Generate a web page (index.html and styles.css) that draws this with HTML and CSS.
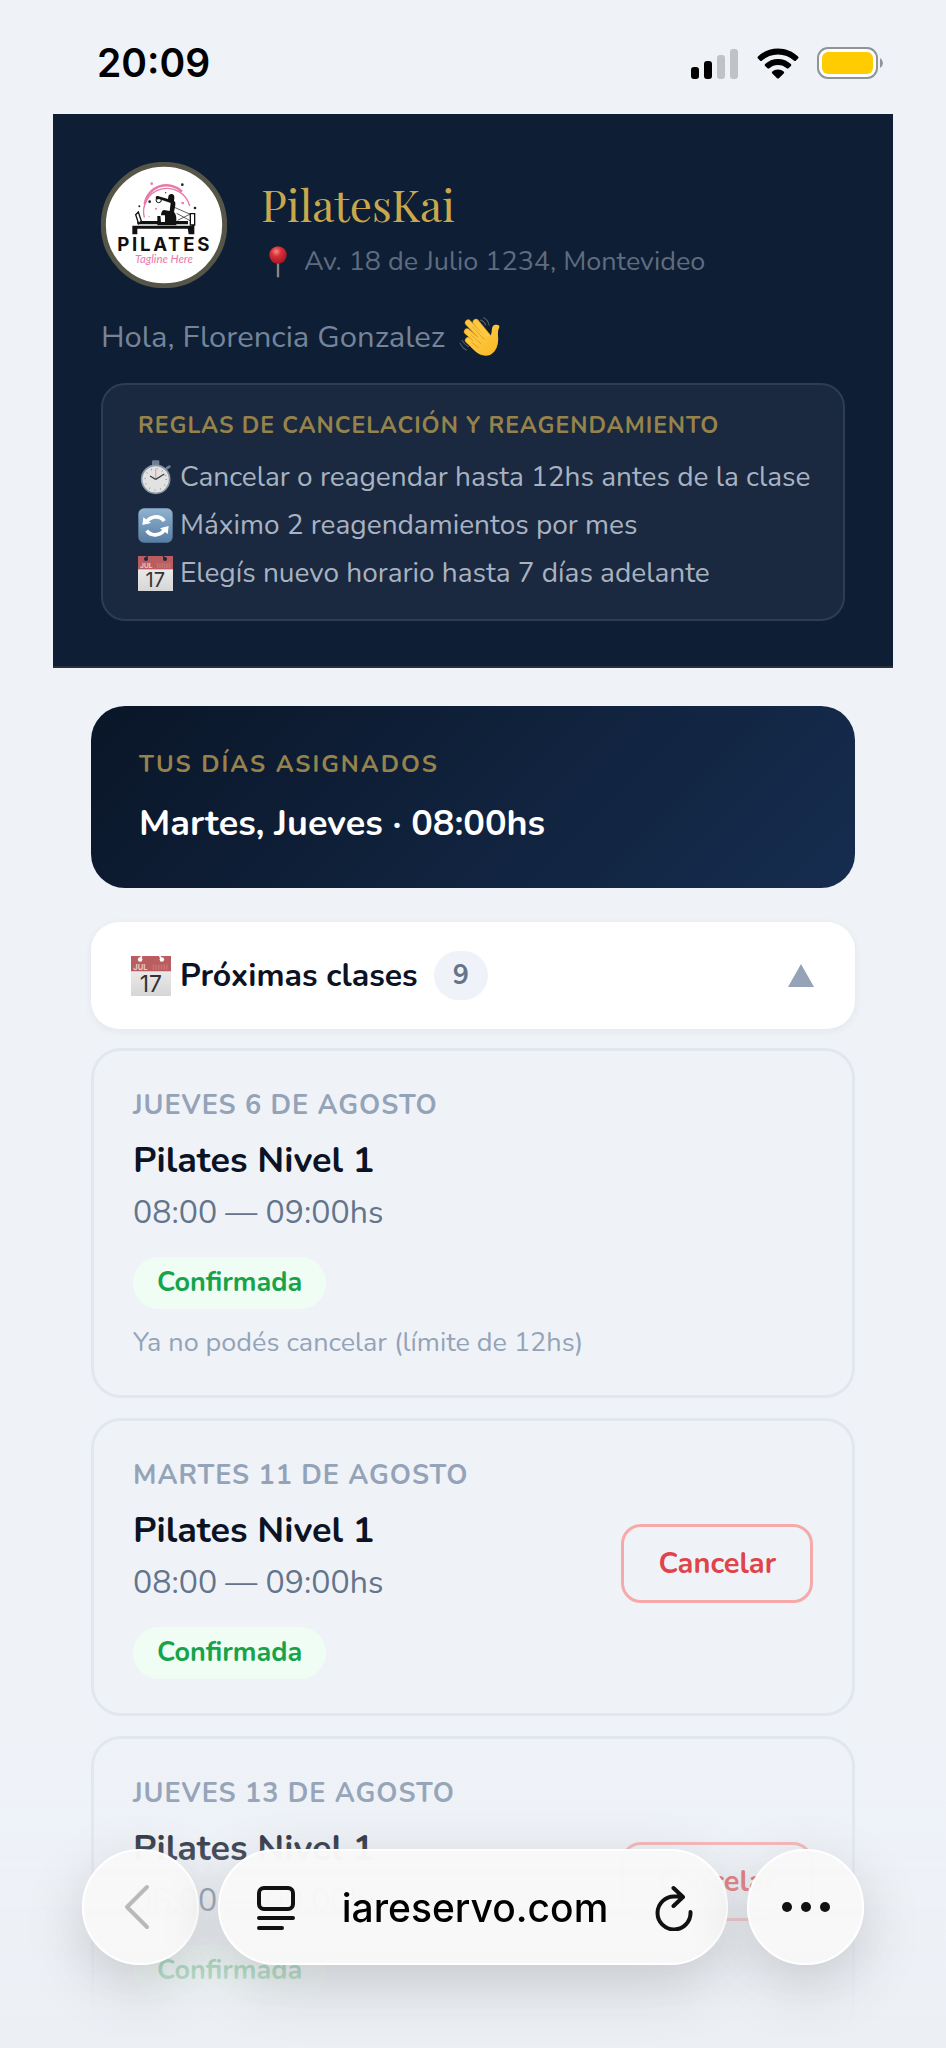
FILE: index.html
```html
<!DOCTYPE html>
<html lang="es">
<head>
<meta charset="utf-8">
<meta name="viewport" content="width=device-width, initial-scale=1">
<title>PilatesKai</title>
<link rel="stylesheet" href="styles.css">
</head>
<body>
<svg class="defs" aria-hidden="true">
  <defs>
    <linearGradient id="sync-bg" x1="0" y1="0" x2="0" y2="1">
      <stop offset="0" stop-color="#8fb3cf"/><stop offset="1" stop-color="#587da3"/>
    </linearGradient>
    <linearGradient id="hand-bg" x1="0" y1="0" x2="1" y2="1">
      <stop offset="0" stop-color="#ffd34f"/><stop offset="1" stop-color="#fbb423"/>
    </linearGradient>
    <radialGradient id="pin-bg" cx=".4" cy=".3" r=".7">
      <stop offset="0" stop-color="#f28a80"/><stop offset=".4" stop-color="#d8303a"/><stop offset="1" stop-color="#a81624"/>
    </radialGradient>
    <linearGradient id="page-bg" x1="0" y1="0" x2="0" y2="1">
      <stop offset="0" stop-color="#d8d8d8"/><stop offset=".4" stop-color="#e8e8e8"/><stop offset="1" stop-color="#d6d6d6"/>
    </linearGradient>
    <symbol id="calendar" viewBox="0 0 105 105">
      <rect y="3" width="105" height="102" fill="url(#page-bg)"/>
      <rect width="105" height="40" fill="#b95d60"/>
      <circle class="hole" cx="24" cy="9" r="6"/><circle class="hole" cx="81" cy="9" r="6"/>
      <path class="hole-line" d="M24 9l4-9M81 9l-6-9"/>
      <text x="6" y="36" class="cal-month">JUL</text>
      <path d="M59 22v14M66 22v14M73 22v14M80 22v14M87 22v14M94 22v14" stroke="#c97375" stroke-width="4"/>
      <text x="52" y="94" text-anchor="middle" class="cal-day">17</text>
    </symbol>
  </defs>
</svg>

<div class="statusbar">
  <time class="clock">20:09</time>
  <div class="status-icons">
    <svg class="signal" viewBox="0 0 48 31" role="img" aria-label="Señal">
      <rect x="0" y="19" width="8" height="12" rx="3"/><rect x="13" y="13" width="8" height="18" rx="3"/>
      <rect x="26" y="7" width="8" height="24" rx="3" fill="#bfc3c8"/><rect x="39" y="1" width="8" height="30" rx="3" fill="#bfc3c8"/>
    </svg>
    <svg class="wifi" viewBox="0 0 42 31" role="img" aria-label="Wi-Fi">
      <path d="M21 0.500C29 .5 36 3.600 41 8.500q1 1 0 2l-2.200 2.200q-.8.700-1.700 0C32.500 8.600 27 6.500 21 6.500S9.500 8.600 4.900 12.700q-.9.700-1.700 0L1 10.500q-1-1 0-2C6 3.600 13 .5 21 .5z"/>
      <path d="M21 11c5 0 9.500 1.900 12.900 5q1 1 0 2l-2.400 2.300q-.8.700-1.700 0C27.300 18.200 24.400 17 21 17s-6.300 1.200-8.800 3.300q-.9.700-1.700 0L8.100 18q-1-1 0-2C11.500 12.900 16 11 21 11z"/>
      <path d="M21 21.500c2.200 0 4.200.8 5.700 2.100q1 .9 0 1.900l-4.800 4.700q-.9.800-1.800 0l-4.800-4.700q-1-1 0-1.900c1.500-1.300 3.500-2.100 5.700-2.100z"/>
    </svg>
    <svg class="battery" viewBox="0 0 67 32" role="img" aria-label="Batería">
      <rect x="1" y="1" width="59" height="30" rx="10" fill="#fff" stroke="#8f949b" stroke-width="2"/>
      <rect x="5" y="5" width="51" height="22" rx="6" fill="#ffcc02"/>
      <path d="M63 11q3 2 3 5t-3 5z" fill="#8f949b"/>
    </svg>
  </div>
</div>

<header class="header">
  <div class="brand">
    <svg class="logo" viewBox="153 158 378 378" role="img" aria-label="Logo Pilates">
      <circle cx="342" cy="347" r="182" fill="#fff" stroke="#565648" stroke-width="15"/>
      <path d="M283 325a70 70 0 1 1 136-35" fill="none" stroke="#e879a8" stroke-width="4"/>
      <path d="M284 285a66 66 0 0 1 112-38" fill="none" stroke="#e879a8" stroke-width="7"/>
      <g fill="#e879a8"><circle cx="305" cy="223" r="4"/><circle cx="398" cy="281" r="4"/><circle cx="318" cy="298" r="3"/><circle cx="297" cy="321" r="2"/></g>
      <g fill="#222"><circle cx="397" cy="226" r="4"/><circle cx="435" cy="296" r="4"/><circle cx="299" cy="277" r="4"/><circle cx="268" cy="291" r="3"/><circle cx="347" cy="250" r="2"/></g>
      <path d="M247 349h186v9H262v17h-15zM433 345v30h-17l-3-19zM262 335h152v10H262z" fill="#111"/>
      <path d="M257 316l8-8 9 27-8 8zM421 313h13v34h-13z" fill="#fff" stroke="#111" stroke-width="4"/>
      <path d="M371 293l50 22M383 333l40-20M380 312l40 22" stroke="#111" stroke-width="2"/>
      <path d="M355 262q1-8 9-8 10 0 9 12l-1 8q6 4 4 14l-4 20q8 8 7 28v12h-57v-28h11q0-17 9-18l17 3 3-24-35-12q-9 4-10-4-1-6 6-5l31 9z" fill="#111"/>
      <path d="M331 318h14v20h-12z" fill="#fff"/><circle cx="326" cy="272" r="8" fill="none" stroke="#111" stroke-width="3"/>
      <text x="344" y="425" text-anchor="middle" class="logo-name">PILATES</text>
      <text x="342" y="462" text-anchor="middle" class="logo-tag">Tagline Here</text>
    </svg>
    <div class="brand-text">
      <h1 class="brand-name">PilatesKai</h1>
      <p class="address">
        <svg class="pin" viewBox="0 0 54 96" aria-hidden="true"><path d="M27 48v43" stroke="#8d8486" stroke-width="7" stroke-linecap="round"/><circle cx="27" cy="27" r="26" fill="url(#pin-bg)"/></svg>
        Av. 18 de Julio 1234, Montevideo
      </p>
    </div>
  </div>
  <p class="greeting">Hola, Florencia Gonzalez
    <svg class="wave" viewBox="1229 617 124 124" role="img" aria-label="Saludo">
      <g fill="none" stroke="#e39a16" stroke-linecap="round" stroke-width="19"><path d="M1279 635l38 46M1256 637l48 50M1253 663l42 37M1256 689l32 27"/></g>
      <g fill="none" stroke="#ffca42" stroke-linecap="round" stroke-width="15"><path d="M1279 635l38 46M1256 637l48 50M1253 663l42 37M1256 689l32 27"/></g>
      <path d="M1323 675q3-10 3-19 2-14 13-13 13 1 8 10-3 4-3 18 4 33-10 50-17 20-43 10-15-7-34-31l30-22z" fill="url(#hand-bg)"/>
      <path d="M1268 648l36 39M1263 671l32 29M1266 694l21 17" fill="none" stroke="#d88f18" stroke-width="2"/>
      <path d="M1301 622q13 5 17 22M1292 629q12 4 16 15M1232 697q6 14 19 21M1238 689q6 12 19 18" fill="none" stroke="#56606a" stroke-width="3" stroke-linecap="round"/>
    </svg>
  </p>
  <section class="rules">
    <h2 class="rules-title">REGLAS DE CANCELACIÓN Y REAGENDAMIENTO</h2>
    <ul class="rules-list">
      <li>
        <svg class="emoji" viewBox="0 0 105 105" aria-hidden="true">
          <rect x="42" y="1" width="22" height="16" rx="4" fill="#6d7f91"/><path d="M86 25l8-5" stroke="#6d7f91" stroke-width="8" stroke-linecap="round"/>
          <circle cx="53" cy="58" r="42" fill="#e3e2e2" stroke="#8b97a4" stroke-width="5"/>
          <circle cx="53" cy="58" r="32" fill="none" stroke="#8b8b8b" stroke-width="5" stroke-dasharray="2 15"/>
          <path d="M53 58V26" stroke="#e9a3a3" stroke-width="4"/><path d="M53 58L36 48M53 58l26-16" stroke="#3e4347" stroke-width="4"/>
        </svg>Cancelar o reagendar hasta 12hs antes de la clase</li>
      <li>
        <svg class="emoji" viewBox="0 0 105 105" aria-hidden="true">
          <rect x="1" y="1" width="103" height="103" rx="17" fill="url(#sync-bg)"/>
          <path d="M24 47a31 29 0 0 1 55-8M81 60a31 29 0 0 1-55 8" fill="none" stroke="#fff" stroke-width="11"/>
          <path d="M13 51l3-23 23 17zM92 54l-3 24-23-17z" fill="#fff"/>
        </svg>Máximo 2 reagendamientos por mes</li>
      <li><svg class="emoji cal-dark" aria-hidden="true"><use href="#calendar"/></svg>Elegís nuevo horario hasta 7 días adelante</li>
    </ul>
  </section>
</header>

<main class="main">
  <section class="assigned">
    <h2 class="assigned-label">TUS DÍAS ASIGNADOS</h2>
    <p class="assigned-days">Martes, Jueves · 08:00hs</p>
  </section>

  <button class="accordion" type="button" aria-expanded="true">
    <svg class="accordion-icon cal-light" aria-hidden="true"><use href="#calendar"/></svg>
    <span class="accordion-title">Próximas clases</span>
    <span class="count">9</span>
    <svg class="triangle" viewBox="0 0 26 23" aria-hidden="true"><path d="M13 0l13 23H0z"/></svg>
  </button>

  <div class="cards">
    <article class="card">
      <div class="card-info">
        <p class="card-date">JUEVES 6 DE AGOSTO</p>
        <h3 class="card-title">Pilates Nivel 1</h3>
        <p class="card-time">08:00 — 09:00hs</p>
        <span class="badge">Confirmada</span>
        <p class="card-note">Ya no podés cancelar (límite de 12hs)</p>
      </div>
    </article>

    <article class="card">
      <div class="card-info">
        <p class="card-date">MARTES 11 DE AGOSTO</p>
        <h3 class="card-title">Pilates Nivel 1</h3>
        <p class="card-time">08:00 — 09:00hs</p>
        <span class="badge">Confirmada</span>
      </div>
      <button class="cancel" type="button">Cancelar</button>
    </article>

    <article class="card">
      <div class="card-info">
        <p class="card-date">JUEVES 13 DE AGOSTO</p>
        <h3 class="card-title">Pilates Nivel 1</h3>
        <p class="card-time">08:00 — 09:00hs</p>
        <span class="badge">Confirmada</span>
      </div>
      <button class="cancel" type="button">Cancelar</button>
    </article>
  </div>
</main>

<nav class="browser" aria-label="Navegador">
  <button class="round" type="button" aria-label="Atrás">
    <svg class="back-icon" viewBox="0 0 26 46" aria-hidden="true"><path d="M23 3L3 23l20 20"/></svg>
  </button>
  <div class="urlbar">
    <button class="tool" type="button" aria-label="Opciones de página">
      <svg class="page-icon" viewBox="0 0 38 46" aria-hidden="true"><rect x="2" y="3" width="34" height="21" rx="5"/><path d="M2 33h34M2 43h23"/></svg>
    </button>
    <button class="url" type="button">iareservo.com</button>
    <button class="tool" type="button" aria-label="Recargar">
      <svg class="reload-icon" viewBox="0 0 38 46" aria-hidden="true"><path d="M27 11.500H20A16.500 16.500 0 1 0 35.500 27M18.500 3L28 12l-9.500 9"/></svg>
    </button>
  </div>
  <button class="round" type="button" aria-label="Más">
    <svg class="more-icon" viewBox="0 0 48 10" aria-hidden="true"><circle cx="5" cy="5" r="5"/><circle cx="24" cy="5" r="5"/><circle cx="43" cy="5" r="5"/></svg>
  </button>
</nav>
</body>
</html>
```
FILE: styles.css
```css
* { box-sizing: border-box; }

body {
  margin: 0;
  background: #eff3f8;
  color: #0b1324;
  font-family: Nunito, Lato, "Noto Sans", sans-serif;
}

h1, h2, h3, p, ul { margin: 0; padding: 0; }
ul { list-style: none; }
button { font: inherit; border: 0; background: none; padding: 0; color: inherit; }
svg { flex: none; display: block; }
.defs { position: absolute; width: 0; height: 0; }

/* Status bar */
.statusbar {
  display: flex;
  align-items: center;
  justify-content: space-between;
  height: 114px;
  padding: 12px 62px 0 97px;
  color: #000;
}
.clock { font: 600 39px/50px Inter, sans-serif; }
.status-icons { display: flex; align-items: center; gap: 18px; }
.signal { width: 48px; height: 31px; }
.wifi { width: 42px; height: 31px; }
.battery { width: 67px; height: 32px; }

/* Header */
.header {
  margin: 0 53px;
  padding: 48px 48px 45px;
  background: #0e1e34;
  border-bottom: 2px solid #2a303a;
}
.brand { display: flex; align-items: center; gap: 34px; }
.logo { width: 126px; height: 126px; }
.logo-name { font: 700 56px Inter, sans-serif; letter-spacing: 8px; fill: #111; }
.logo-tag { font: italic 34px Lato, sans-serif; fill: #e879a8; }
.brand-text { padding-top: 8px; }
.brand-name {
  font: 400 44px/56px "Playfair Display", "Liberation Serif", serif;
  color: #c9a84c;
}
.address {
  display: flex;
  align-items: center;
  gap: 17px;
  margin-top: 10px;
  padding-left: 8px;
  font-size: 27px;
  line-height: 40px;
  color: #5f6c80;
}
.pin { width: 18px; height: 32px; }
.greeting {
  display: flex;
  align-items: center;
  gap: 14px;
  margin-top: 29px;
  font-size: 31px;
  line-height: 40px;
  color: #76849a;
}
.wave { width: 42px; height: 42px; margin: -1px 0; }
.rules {
  margin-top: 26px;
  padding: 24px 24px 22px 35px;
  border: 2px solid #2e3d53;
  border-radius: 24px;
  background: #1a293f;
}
.rules-title {
  margin-bottom: 10px;
  font-size: 23px;
  line-height: 34px;
  font-weight: 700;
  letter-spacing: 1px;
  color: #96834b;
}
.rules-list li {
  display: flex;
  align-items: center;
  gap: 7px;
  font-size: 28px;
  line-height: 48px;
  color: #a8b2c1;
}
.emoji { width: 35px; height: 35px; }
.cal-month { font: 700 20px Inter, sans-serif; fill: #e8c9c9; }
.cal-day { font: 400 60px Inter, sans-serif; fill: #333; }
.cal-dark { --hole: #1a293f; }
.cal-light { --hole: #fff; }
.hole { fill: var(--hole); }
.hole-line { stroke: var(--hole); stroke-width: 4px; }

/* Content */
.main { padding: 38px 91px 0; }
.assigned {
  padding: 41px 48px 38px;
  border-radius: 34px;
  background: linear-gradient(135deg, #0a1628, #162d50);
}
.assigned-label {
  font-size: 24px;
  line-height: 34px;
  font-weight: 700;
  letter-spacing: 2px;
  color: #96834b;
}
.assigned-days {
  margin-top: 16px;
  font-size: 36px;
  line-height: 53px;
  font-weight: 700;
  color: #fff;
}
.accordion {
  display: flex;
  align-items: center;
  width: 100%;
  height: 107px;
  margin-top: 34px;
  padding: 0 41px 0 40px;
  border-radius: 28px;
  background: #fff;
  box-shadow: 0 2px 8px rgb(15 30 52 / 6%);
}
.accordion-icon { width: 40px; height: 40px; margin-right: 9px; }
.accordion-title { font-size: 32px; line-height: 44px; font-weight: 700; }
.count {
  margin-left: 16px;
  padding: 0 19px;
  border-radius: 25px;
  background: #eff3f9;
  font-size: 27px;
  line-height: 49px;
  font-weight: 700;
  color: #64748b;
}
.triangle { width: 26px; height: 23px; margin-left: auto; fill: #94a3b8; }

.cards { display: grid; gap: 20px; margin-top: 19px; }
.card {
  display: flex;
  align-items: center;
  justify-content: space-between;
  padding: 38px 39px 34px;
  border: 3px solid #e2e7ef;
  border-radius: 30px;
}
.card-date {
  font-size: 27px;
  line-height: 34px;
  font-weight: 700;
  letter-spacing: 1px;
  color: #94a3b8;
}
.card-title { margin-top: 13px; font-size: 36px; line-height: 50px; font-weight: 700; }
.card-time { margin: 6px 0 23px; font-size: 32px; line-height: 42px; color: #64748b; }
.badge {
  display: block;
  width: fit-content;
  padding: 0 24px;
  border-radius: 26px;
  background: #f0fdf4;
  font-size: 27px;
  line-height: 52px;
  font-weight: 700;
  color: #16a34a;
}
.card-note { margin-top: 16px; font-size: 27px; line-height: 36px; color: #94a3b8; }
.cancel {
  margin-bottom: 12px;
  padding: 0 34px;
  border: 3px solid #f7a9aa;
  border-radius: 20px;
  font-size: 29px;
  line-height: 73px;
  font-weight: 700;
  color: #e04448;
}

/* Floating browser toolbar */
.browser {
  position: fixed;
  inset: auto 0 0;
  display: flex;
  gap: 19px;
  padding: 129px 82px 83px;
  background: linear-gradient(rgb(236 239 244 / 0%), rgb(236 239 244 / 4%) 26%, rgb(236 239 244 / 24%) 38%, rgb(236 239 244 / 74%) 76%, #eceff4 96%);
}
.round, .urlbar {
  display: flex;
  align-items: center;
  height: 116px;
  border: 2px solid #fff;
  border-radius: 58px;
  background: rgb(248 248 248 / 98%);
  box-shadow: 0 20px 60px rgb(0 0 0 / 17%);
}
.round { flex: none; justify-content: center; width: 117px; }
.urlbar { flex: 1; justify-content: space-between; padding: 2px 33px 0 37px; }
.url { font: 500 39px/50px Inter, sans-serif; color: #000; }
.back-icon, .page-icon, .reload-icon { fill: none; stroke: #111; stroke-width: 4px; stroke-linecap: round; stroke-linejoin: round; }
.back-icon { width: 26px; height: 46px; margin-right: 8px; stroke: #b9b9b9; }
.page-icon, .reload-icon { width: 38px; height: 46px; }
.more-icon { width: 48px; height: 10px; fill: #111; }
```
